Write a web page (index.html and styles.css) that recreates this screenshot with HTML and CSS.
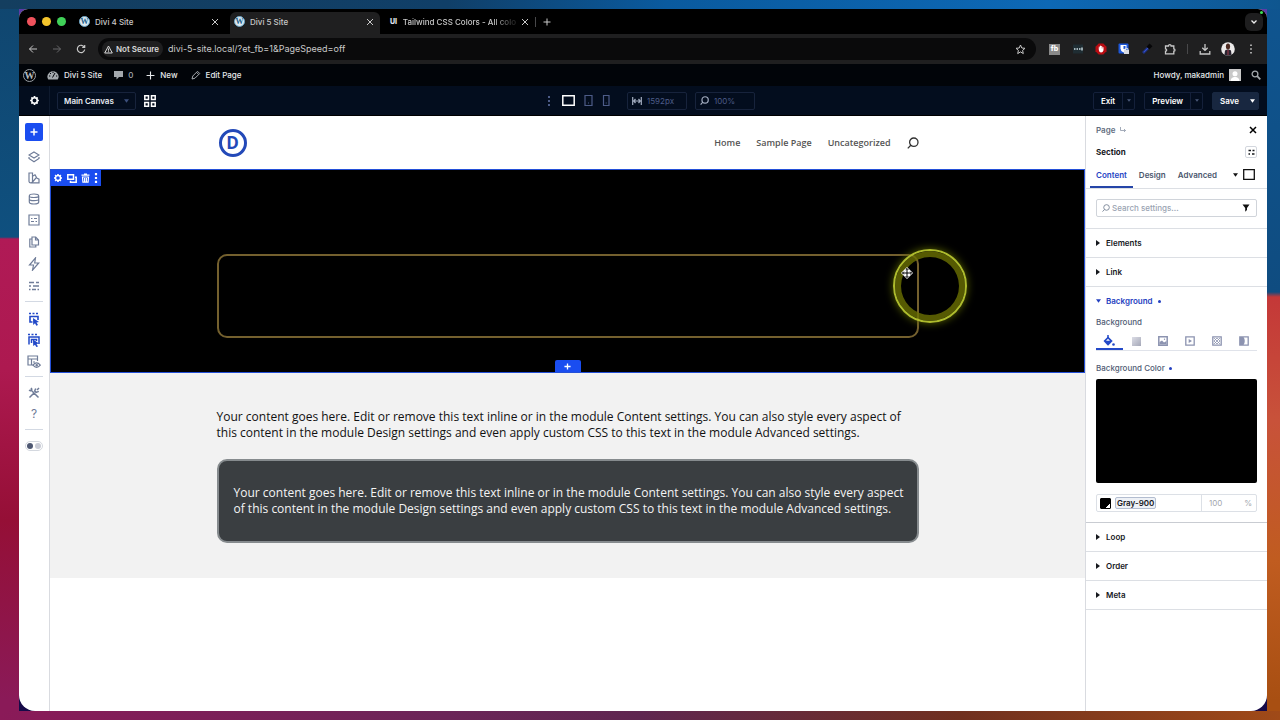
FILE: index.html
```html
<!DOCTYPE html>
<html lang="en">
<head>
<meta charset="utf-8">
<title>Divi 5 Site</title>
<link rel="stylesheet" href="styles.css">
</head>
<body>
<svg class="defs" aria-hidden="true">
  <symbol id="x" viewBox="0 0 8 8"><path d="M1 1l6 6M7 1L1 7"/></symbol>
  <symbol id="plus" viewBox="0 0 8 8"><path d="M4 0.5v7M0.5 4h7"/></symbol>
  <symbol id="gear" viewBox="0 0 12 12"><circle cx="6" cy="6" r="3" fill="none" stroke-width="1.7"/><path stroke-width="1.9" d="M6 1.2v1.6M6 9.2v1.6M1.2 6h1.6M9.2 6h1.6M2.6 2.6l1.1 1.1M8.3 8.3l1.1 1.1M2.6 9.4l1.1-1.1M8.3 3.7l1.1-1.1"/></symbol>
  <symbol id="lens" viewBox="0 0 12 12"><circle cx="6.8" cy="5.2" r="4.2" fill="none"/><path d="M3.8 8.2L.8 11.4"/></symbol>
  <symbol id="down" viewBox="0 0 6 4"><path d="M0 0h6L3 4z" fill="currentColor" stroke="none"/></symbol>
  <symbol id="right" viewBox="0 0 4 6"><path d="M0 0v6l4-3z" fill="currentColor" stroke="none"/></symbol>
</svg>

<div class="frame">
<div class="window">
  <header class="tabs">
    <div class="lights"><i class="red"></i><i class="yellow"></i><i class="green"></i></div>
    <div class="tab"><span class="wp">W</span><span class="title">Divi 4 Site</span><button aria-label="Close tab"><svg width="8" height="8"><use href="#x"/></svg></button></div>
    <div class="tab active"><span class="wp">W</span><span class="title">Divi 5 Site</span><button aria-label="Close tab"><svg width="8" height="8"><use href="#x"/></svg></button></div>
    <div class="tab last"><span class="ui">UI</span><span class="title fade">Tailwind CSS Colors - All colo</span><button aria-label="Close tab"><svg width="8" height="8"><use href="#x"/></svg></button></div>
    <i class="sep"></i>
    <button class="newtab" aria-label="New tab"><svg width="8" height="8"><use href="#plus"/></svg></button>
    <button class="tabmenu" aria-label="Search tabs"><svg width="8" height="6" viewBox="0 0 8 6"><path d="M1.5 1.5L4 4l2.500-2.500" stroke-width="1.300"/></svg></button>
    <i class="cam"></i>
  </header>

  <div class="toolbar">
    <div class="navs">
      <button aria-label="Back"><svg width="10" height="10" viewBox="0 0 10 10"><path d="M9 5H1.500M5 1.500L1.500 5 5 8.500"/></svg></button>
      <button class="dim" aria-label="Forward"><svg width="10" height="10" viewBox="0 0 10 10"><path d="M1 5h7.500M5 1.500L8.500 5 5 8.500"/></svg></button>
      <button aria-label="Reload"><svg width="10" height="10" viewBox="0 0 10 10"><path d="M8.300 3.200A3.700 3.700 0 1 0 8.700 5.500M8.700 1v2.500H6.200" stroke-width="1.200"/></svg></button>
    </div>
    <div class="omni">
      <span class="chip"><svg width="9" height="9" viewBox="0 0 9 9"><path d="M4.500 1L8.300 8H.7zM4.500 3.500v2.200M4.500 6.300v.9"/></svg>Not Secure</span>
      <input type="text" aria-label="Address" value="divi-5-site.local/?et_fb=1&amp;PageSpeed=off">
      <svg width="11" height="11" viewBox="0 0 11 11"><path d="M5.500 1l1.300 3 3.200.3-2.400 2.100.7 3.200-2.800-1.700-2.800 1.700.7-3.200L1 4.300 4.200 4z"/></svg>
    </div>
    <div class="exts">
      <button class="fb" aria-label="fb extension">fb</button>
      <button aria-label="Dots extension"><svg width="10" height="10" viewBox="0 0 10 10"><rect width="10" height="9" y=".5" fill="#1f2d33" stroke="none"/><path d="M1 5h1.500M3.500 5H5M6 5h1.500M9 3.500v3" stroke="#cfe0e6" stroke-width="1.400"/></svg></button>
      <button aria-label="Ad blocker"><svg width="12" height="12" viewBox="0 0 12 12"><path d="M3.700.5h4.600l3.200 3.200v4.600l-3.200 3.200H3.700L.5 8.300V3.700z" fill="#b80c12" stroke="none"/><path d="M4.300 6V3.600M5.500 6V2.700M6.700 6V3M7.900 6.500V4" stroke="#fff"/><path d="M3.800 5.500h4.600v2q-.5 2-2.300 2T3.800 7z" fill="#fff" stroke="none"/></svg></button>
      <button aria-label="Password manager"><svg width="12" height="12" viewBox="0 0 12 12"><rect x=".5" y=".5" width="10" height="10" rx="1" fill="#1d57d8" stroke="none"/><path d="M2.500 2h6v3.500q0 2.500-3 4-3-1.500-3-4z" fill="#fff" stroke="none"/><path d="M5.500 3H7.500v3h-2z" fill="#1d57d8" stroke="none"/><rect x="6" y="7" width="5" height="4" fill="#d8dce4" stroke="none"/><path d="M7 7V5.700h3V7" stroke="#d8dce4"/></svg></button>
      <button aria-label="Colour picker"><svg width="12" height="12" viewBox="0 0 12 12"><path d="M2 10l5-5" stroke="#20368e" stroke-width="2.600"/><path d="M7 5l3-3.200" stroke="#060608" stroke-width="4"/><path d="M3 9l4-4" stroke="#3952c4"/></svg></button>
      <button aria-label="Extensions"><svg width="12" height="12" viewBox="0 0 12 12"><path d="M1.500 3h3a1.200 1.200 0 1 1 2.600 0h2.700v2.800a1.200 1.200 0 1 1 0 2.400v2.600H1.500V8.200a1.200 1.200 0 1 0 0-2.400z" stroke-width="1.300"/></svg></button>
      <i class="sep"></i>
      <button aria-label="Downloads"><svg width="12" height="12" viewBox="0 0 12 12"><path d="M6 1v6M3.300 4.700L6 7.400l2.700-2.700M1.200 8v3h9.600V8" stroke-width="1.300"/></svg></button>
      <button aria-label="Profile"><svg width="14" height="14" viewBox="0 0 14 14"><circle cx="7" cy="7" r="6.800" fill="#eceaea" stroke="none"/><path d="M3.500 12.800L4 8.500q3-2 6 0l.5 4.300q-3.500 2-7 0z" fill="#2a2430" stroke="none"/><ellipse cx="7" cy="4.500" rx="2.100" ry="3" fill="#4d2b22" stroke="none"/><path d="M7 8v5" stroke="#a03c4c"/></svg></button>
      <button aria-label="Chrome menu"><svg width="12" height="12" viewBox="0 0 12 12"><path d="M6 1.500V3M6 5.200v1.500M6 9v1.500" stroke-width="1.600"/></svg></button>
    </div>
  </div>

  <nav class="wpbar">
    <span class="wp outline">W</span>
    <a href="#" class="site"><svg width="12" height="10" viewBox="0 0 12 10"><path d="M1.300 9.500A5.500 5.500 0 1 1 10.700 9.500z" fill="#a3a8ad" stroke="none"/><path d="M5.500 7.500L8 3M2 6h1.300M3 3l1 1M6 1.500V3M9 6h1.200" stroke="#010409"/></svg>Divi 5 Site</a>
    <a href="#" class="comments"><svg width="9" height="10" viewBox="0 0 9 10"><path d="M0 1h9v6H5L2.500 9.500V7H0z" fill="#a3a8ad" stroke="none"/></svg>0</a>
    <a href="#" class="new"><svg width="9" height="9"><use href="#plus"/></svg>New</a>
    <a href="#" class="edit"><svg width="10" height="10" viewBox="0 0 10 10"><path d="M1 9l.8-3L6.500 1.300l2.200 2.200L4 8.200zM5.500 2.300l2.200 2.200" stroke="#a3a8ad"/></svg>Edit Page</a>
    <a href="#" class="howdy">Howdy, makadmin<svg width="12" height="12" viewBox="0 0 12 12"><rect width="12" height="12" fill="#c9c9c9" stroke="none"/><circle cx="6" cy="4.700" r="2.500" fill="#fff" stroke="none"/><path d="M1.500 12q.5-4 4.500-4.300Q10 8 10.500 12z" fill="#fff" stroke="none"/></svg></a>
    <a href="#" aria-label="Search"><svg width="10" height="10" viewBox="0 0 10 10"><circle cx="4" cy="4" r="2.900" stroke="#a3a8ad" stroke-width="1.300"/><path d="M6.200 6.200L9.300 9.300" stroke="#a3a8ad" stroke-width="1.800"/></svg></a>
  </nav>

  <div class="divibar">
    <div class="left">
      <button class="settings" aria-label="Settings"><svg width="11" height="11"><use href="#gear"/></svg></button>
      <div class="selwrap"><select aria-label="Canvas"><option>Main Canvas</option></select><svg width="5" height="4"><use href="#down"/></svg></div>
      <button aria-label="Grid view"><svg width="12" height="12" viewBox="0 0 12 12"><path d="M.8.8h3.700v3.700H.8zM7.500.8h3.700v3.700H7.500zM.8 7.500h3.700v3.700H.8zM7.500 7.500h3.700v3.700H7.500z" stroke-width="1.500"/></svg></button>
    </div>
    <div class="center">
      <button aria-label="More"><svg width="8" height="12" viewBox="0 0 8 12"><path d="M4 1v2M4 5v2M4 9v2" stroke-width="2"/></svg></button>
      <button class="on" aria-label="Desktop"><svg width="13" height="11" viewBox="0 0 13 11"><path d="M.8.800h11.400v9.400H.8z" stroke-width="1.500"/></svg></button>
      <button aria-label="Tablet"><svg width="9" height="11" viewBox="0 0 9 11"><path d="M1 .5h7v10H1zM4 8h1" stroke-width="1.200"/></svg></button>
      <button aria-label="Phone"><svg width="8" height="11" viewBox="0 0 8 11"><path d="M1.500.5h5.500v10H1.500zM3.700 8h1" stroke-width="1.200"/></svg></button>
      <label class="field"><svg width="10" height="10" viewBox="0 0 10 10"><path d="M.7 1v8M9.300 1v8M1.500 5h7M3.500 3L1.800 5l1.700 2M6.500 3l1.700 2-1.700 2" stroke-width="1.200"/></svg><input type="text" aria-label="Width" value="1592px"></label>
      <label class="field"><svg width="9" height="9" stroke-width="1.600"><use href="#lens"/></svg><input type="text" aria-label="Zoom" value="100%"></label>
    </div>
    <div class="actions">
      <div class="split"><button>Exit</button><button aria-label="Exit options"><svg width="4" height="3"><use href="#down"/></svg></button></div>
      <div class="split"><button>Preview</button><button aria-label="Preview options"><svg width="4" height="3"><use href="#down"/></svg></button></div>
      <div class="split save"><button>Save</button><button aria-label="Save options"><svg width="5" height="4"><use href="#down"/></svg></button></div>
    </div>
  </div>

  <div class="workspace">
    <aside class="rail">
      <button class="add" aria-label="Add"><svg width="8" height="8"><use href="#plus"/></svg></button>
      <div class="group seven">
        <button aria-label="Layers"><svg viewBox="0 0 12 12"><path d="M6 1l5 3-5 3-5-3zM1 6v1.500l5 3.300 5-3.300V6"/></svg></button>
        <button aria-label="Presets"><svg viewBox="0 0 12 12"><path d="M1 1h3.500v8.500q0 1.300-1.700 1.300T1 9.500zM4.500 4.200L7 2.800l1.500 2.700-4 4.500M3 10.800h8V7.200L8.700 6"/></svg></button>
        <button aria-label="Dynamic data"><svg viewBox="0 0 12 12"><path d="M1.300 3q0-2 4.700-2t4.700 2v6q0 2-4.700 2T1.300 9zM1.300 3q0 1.500 4.700 1.500T10.700 3M1.300 6q0 1.700 4.700 1.700T10.700 6"/></svg></button>
        <button aria-label="Variables"><svg viewBox="0 0 12 12"><path d="M1 1h10v10H1zM3 4.500h1.500M6 4.500h3M3 7.500h3M7.500 7.500H9"/></svg></button>
        <button aria-label="Pages"><svg viewBox="0 0 12 12"><path d="M4 1h3.700L10.500 4v5H4zM4 3H1.800v8h6V9M7.500 1v3h3"/></svg></button>
        <button aria-label="Interactions"><svg class="tall" viewBox="0 0 12 14"><path d="M7.500.8L1.500 8h4l-1 5.200L10.700 6H6.700z"/></svg></button>
        <button aria-label="Options"><svg viewBox="0 0 12 12"><path d="M1 2.500h5M8 2.500h3M1 6h2M5 6h6M1 9.500h1.500M4 9.500h4M9.500 9.500H11" stroke-width="1.500"/></svg></button>
      </div>
      <div class="group three">
        <button class="blue" aria-label="Hover select"><svg class="tall" viewBox="0 0 12 14"><path d="M1 1.500h2M4.500 1.500h2M8 1.500h2M4.500 10H2V4.500h8V8" stroke-width="1.600"/><path d="M5 6l6 4-2.500.5 1.500 2.500-1.700.7L7 11.200 5.200 13z" fill="currentColor" stroke="none"/></svg></button>
        <button class="blue" aria-label="Nested select"><svg class="tall" viewBox="0 0 12 14"><path d="M0 1.500h2M3.500 1.500h2M7 1.500h2M1 11.500V4h10v7M3.500 10V6.500h5V8" stroke-width="1.500"/><path d="M5 6.500l6 4-2.500.5 1.500 2.500-1.700.5L7 11.700 5.200 13z" fill="currentColor" stroke="none"/></svg></button>
        <button aria-label="Layout view"><svg class="wide" viewBox="0 0 14 14"><path d="M6 10H1V1h9.500v5M1 4h9.500M4.500 4v6M6 7h2"/><path d="M6 10.200q3.500-4.500 7.300 0-3.800 4.500-7.300 0z"/><circle cx="9.700" cy="10.200" r=".7"/></svg></button>
      </div>
      <div class="group two">
        <button aria-label="Tools"><svg viewBox="0 0 12 12"><path d="M3.500 3.500l7 7M1.500 10.500l5-5M1 3l1.200.8 1.600-1.600L3 1M7.700 1.500L6.700 4l1.400 1.400 2.700-1M9 3l2-2" stroke-width="1.500"/></svg></button>
        <button aria-label="Help">?</button>
      </div>
      <button class="toggle" aria-label="Theme"><i></i><i></i></button>
    </aside>

    <main class="canvas">
      <div class="sitehead"><div class="inner">
        <span class="logo">D</span>
        <nav><a href="#">Home</a><a href="#">Sample Page</a><a href="#">Uncategorized</a><a href="#" aria-label="Search"><svg width="12" height="12" stroke-width="1.300"><use href="#lens"/></svg></a></nav>
      </div></div>

      <section class="dark">
        <div class="tools">
          <button aria-label="Section settings"><svg width="10" height="10"><use href="#gear"/></svg></button>
          <button aria-label="Duplicate"><svg width="10" height="9" viewBox="0 0 10 9"><path d="M.8.800h5.700v4.400H.8zM8 3.200h1.200v5H3.500V6.800" stroke-width="1.500"/></svg></button>
          <button aria-label="Delete"><svg width="9" height="10" viewBox="0 0 9 10"><path d="M.5 2.200h8M3 1h3M1.500 4h6l-.4 5.200H1.900zM3.600 5v3.500M5.400 5v3.500" stroke-width="1.200"/></svg></button>
          <button aria-label="More"><svg width="4" height="10" viewBox="0 0 4 10"><path d="M2 0v2.200M2 3.900v2.200M2 7.800V10" stroke-width="2.200"/></svg></button>
        </div>
        <div class="box outlined">
          <span class="ring"></span>
          <svg class="cursor" width="12" height="12" viewBox="0 0 12 12"><path d="M6 0l6 6-6 6-6-6z" fill="#fff" stroke="none"/><path d="M6 1.500v9M1.500 6h9M4.700 2.800L6 1.500l1.300 1.300M4.700 9.200L6 10.500l1.300-1.300M2.800 4.700L1.500 6l1.300 1.300M9.200 4.700L10.500 6 9.200 7.300" stroke="#000"/></svg>
        </div>
        <button class="addrow" aria-label="Add section"><svg width="7" height="7"><use href="#plus"/></svg></button>
      </section>

      <section class="light">
        <p>Your content goes here. Edit or remove this text inline or in the module Content settings. You can also style every aspect of this content in the module Design settings and even apply custom CSS to this text in the module Advanced settings.</p>
        <div class="box filled"><p>Your content goes here. Edit or remove this text inline or in the module Content settings. You can also style every aspect of this content in the module Design settings and even apply custom CSS to this text in the module Advanced settings.</p></div>
      </section>
    </main>

    <aside class="panel">
      <div class="crumb"><a href="#">Page</a><svg width="6" height="6" viewBox="0 0 6 6"><path d="M.5 0v3.500h5M4 2l1.500 1.500L4 5" stroke="#8d97a8" stroke-width=".8"/></svg><button aria-label="Close"><svg width="8" height="8"><use href="#x"/></svg></button></div>
      <div class="heading"><h2>Section</h2><button aria-label="Presets"><svg width="7" height="7" viewBox="0 0 7 7"><path d="M.5 1.500H3M4.500 1.500h2M.5 5h1.500M4 5h2.500" stroke-width="1.400"/></svg></button></div>
      <div class="ptabs"><button class="on">Content</button><button>Design</button><button>Advanced</button><button class="view" aria-label="View"><svg width="5" height="4"><use href="#down"/></svg><svg width="12" height="11" viewBox="0 0 12 11"><path d="M.7.700h10.600v9.600H.7z" stroke-width="1.300"/></svg></button></div>
      <div class="searchrow"><label><svg width="8" height="8" stroke-width="1.400"><use href="#lens"/></svg><input type="text" aria-label="Search settings" placeholder="Search settings..."><svg width="8" height="8" viewBox="0 0 8 8"><path d="M.5.500h7L5 4v2L3.200 7.800V4z" fill="#111" stroke="none"/></svg></label></div>
      <button class="acc"><svg width="4" height="6"><use href="#right"/></svg>Elements</button>
      <button class="acc"><svg width="4" height="6"><use href="#right"/></svg>Link</button>
      <div class="open">
        <button class="acc blue"><svg width="5" height="4"><use href="#down"/></svg>Background<i class="dot"></i></button>
        <h3>Background</h3>
        <div class="types">
          <button class="on" aria-label="Color"><svg width="12" height="12" viewBox="0 0 12 12"><path d="M5 0v3" stroke-width="1.500"/><path d="M5 1.500L9.700 6 5 10.700.5 6z" fill="currentColor" stroke="none"/><path d="M3 5.800L5 3.800l2 2z" fill="#fff" stroke="none"/><circle cx="10.500" cy="9.500" r="1.300" fill="currentColor" stroke="none"/></svg></button>
          <button aria-label="Gradient"><i class="grad"></i></button>
          <button aria-label="Image"><svg width="10" height="10" viewBox="0 0 10 10"><path d="M.8.800h8.400v8.400H.8z" stroke-width="1.500"/><path d="M1.500 8.500V6L4 4.500 6 6.500 8.500 5v3.500z" fill="currentColor" stroke="none"/><circle cx="6.500" cy="3.200" r=".7" fill="currentColor" stroke="none"/></svg></button>
          <button aria-label="Video"><svg width="10" height="10" viewBox="0 0 10 10"><path d="M.8.800h8.400v8.400H.8z" stroke-width="1.300"/><path d="M3.700 3v4L7 5z" fill="currentColor" stroke="none"/></svg></button>
          <button aria-label="Pattern"><svg width="10" height="10" viewBox="0 0 10 10"><path d="M.8.800h8.400v8.400H.8z" stroke-width="1.300"/><path d="M2 2l6 6M2 8l6-6M5 2l3 3-3 3-3-3z" stroke-width=".8"/></svg></button>
          <button aria-label="Mask"><svg width="10" height="10" viewBox="0 0 10 10"><path d="M.8.800h8.400v8.400H.8z" stroke-width="1.300"/><path d="M1 1h3.500q2.500 4 0 8H1z" fill="currentColor" stroke="none"/></svg></button>
        </div>
        <h3>Background Color<i class="dot"></i></h3>
        <button class="preview" aria-label="Background color preview"></button>
        <div class="color"><div class="name"><button class="swatch" aria-label="Pick color"></button><button class="var">Gray-900</button></div><label class="opacity"><input type="text" aria-label="Opacity" value="100">%</label></div>
      </div>
      <button class="acc"><svg width="4" height="6"><use href="#right"/></svg>Loop</button>
      <button class="acc"><svg width="4" height="6"><use href="#right"/></svg>Order</button>
      <button class="acc"><svg width="4" height="6"><use href="#right"/></svg>Meta</button>
    </aside>
  </div>
</div>
</div>
</body>
</html>
```
FILE: styles.css
```css
* { box-sizing: border-box; }
html, body { margin: 0; height: 100%; }
body {
  padding: 9px 13px 9px 19px;
  font-family: Inter, "Liberation Sans", sans-serif;
  font-size: 8px;
  line-height: 12px;
  background:
    linear-gradient(90deg, #143e5f, #103f68 35%, #0a5a9e 52%, #0d68b5 82%, #0f568f) 0 0 / 100% 9px no-repeat,
    linear-gradient(90deg, #8a1a58, #6b2558 35%, #5f2650 50%, #70301f 75%, #a04a18) 0 100% / 100% 9px no-repeat,
    linear-gradient(180deg, #10466f, #0f507f 237px, #b01a56 239px, #ad1950 370px, #950f36 520px, #8a1a58 700px) 0 0 / 19px 100% no-repeat,
    linear-gradient(180deg, #0f5590, #0f4c80 292px, #c43838 297px, #c8523a 420px, #c05c20 560px, #a84f12 700px) 100% 0 / 13px 100% no-repeat,
    #222;
}
button, input, select { font: inherit; color: inherit; margin: 0; padding: 0; border: 0; background: none; min-width: 0; outline: 0; }
button { display: inline-flex; align-items: center; justify-content: center; flex: none; }
a { color: inherit; text-decoration: none; }
svg { display: block; flex: none; fill: none; stroke: currentColor; }
.defs { position: absolute; width: 0; height: 0; }
.frame { height: 100%; background: linear-gradient(#5b3aa8 50%, #160a48 50%); }
.window { height: 100%; display: flex; flex-direction: column; overflow: hidden; border-radius: 9px 9px 16px 16px; background: #fff; }

.tabs { flex: none; height: 25px; display: flex; align-items: center; background: #000; color: #c9c9c9; padding: 0 3px 0 8px; position: relative; font-weight: 500; }
.lights { display: flex; gap: 6px; width: 48px; }
.lights i { width: 9px; height: 9px; border-radius: 50%; }
.red { background: #f0525c; }
.yellow { background: #f5c52c; }
.green { background: #40d158; }
.tab { width: 150px; height: 22px; margin-right: 5px; padding: 0 6px 3px 4px; display: flex; align-items: center; gap: 5px; align-self: flex-end; border-radius: 6px 6px 0 0; }
.tab.active { background: #1f1f20; }
.tab.last { margin-right: 0; }
.tab .title { flex: 1; white-space: nowrap; }
.tab .fade { mask-image: linear-gradient(90deg, #000 80%, #0003 97%); }
.wp { width: 11px; height: 11px; border-radius: 50%; background: #dce9f0; border: 1px solid #6ca4c4; color: #1c5f8a; font: 700 8px/9px "Liberation Serif", serif; text-align: center; flex: none; }
.ui { width: 10px; font-weight: 800; font-size: 7px; text-align: center; color: #e4e4ee; }
.sep { width: 1px; height: 10px; background: #48484a; }
.newtab { margin-left: 7px; }
.tabmenu { margin-left: auto; width: 18px; height: 18px; border-radius: 6px; background: #1e1e1f; color: #eee; margin-right: 1px; }
.cam { position: absolute; right: 4px; top: 2px; width: 3px; height: 3px; border-radius: 50%; background: #3ede55; }

.toolbar { flex: none; height: 30px; display: flex; align-items: center; background: #1f1f20; color: #c8c8c8; padding: 0 9px; }
.navs { display: flex; gap: 14px; width: 70px; }
.dim { color: #68686a; }
.omni { flex: 1; height: 22px; border-radius: 11px; background: #0a0a0b; display: flex; align-items: center; padding: 0 10px 0 4px; gap: 5px; font-size: 9px; }
.omni input { flex: 1; color: #c9c9c9; }
.chip { display: flex; align-items: center; gap: 3px; height: 16px; padding: 0 4px 0 2px; border-radius: 8px; background: #1f1f20; font-size: 8px; font-weight: 600; color: #d8d8d8; white-space: nowrap; }
.exts { display: flex; align-items: center; gap: 9px; padding-left: 11px; }
.exts button { width: 14px; height: 14px; }
.exts .fb { width: 11px; height: 11px; margin: 0 2px; background: #8a8a8a; color: #fff; font-weight: 800; font-size: 7px; }
.exts .sep { margin: 0 1px; }

.wpbar { flex: none; height: 22px; display: flex; align-items: center; background: #010409; color: #e6e8ea; padding: 0 6px 0 4px; font-weight: 500; white-space: nowrap; }
.wpbar a { display: flex; align-items: center; gap: 5px; }
.wpbar .outline { width: 13px; height: 13px; background: none; border-color: #9a9fa4; color: #b4b8bc; line-height: 11px; font-size: 10px; }
.wpbar .site { margin-left: 11px; }
.wpbar .comments { margin-left: 12px; color: #a3a8ad; }
.wpbar .new { margin-left: 13px; }
.wpbar .edit { margin-left: 13px; }
.wpbar .howdy { margin-left: auto; margin-right: 10px; }

.divibar { flex: none; height: 30px; display: grid; grid-template-columns: 1fr auto 1fr; align-items: center; background: #030d1e; color: #fff; border-bottom: 1px solid #000; font-weight: 600; }
.divibar .left { display: flex; align-items: center; height: 100%; }
.settings { width: 31px; height: 100%; border-right: 1px solid #0e1a2e; }
.selwrap { margin: 0 8px 0 7px; width: 79px; height: 18px; border: 1px solid #17233c; border-radius: 2px; display: flex; align-items: center; padding: 0 6px; color: #3c4f7c; }
.selwrap select { flex: 1; appearance: none; color: #e8ebf2; }
.center { display: flex; align-items: center; color: #4d5c88; padding-left: 14px; }
.center button { margin-right: 9px; }
.center .on { color: #fff; }
.field { width: 60px; height: 18px; margin-left: 8px; border: 1px solid #17233c; border-radius: 2px; display: flex; align-items: center; gap: 5px; padding: 0 4px; font-weight: 400; }
.field svg { color: #a4adc0; }
.field input { width: 100%; }
.actions { display: flex; justify-content: flex-end; gap: 9px; padding-right: 8px; }
.split { display: flex; height: 18px; border: 1px solid #14203a; border-radius: 2px; }
.split button + button { width: 12px; border-left: 1px solid #14203a; color: #4a5878; }
.split button:first-child { padding: 0 7px; }
.split.save { background: #182740; border-color: #182740; }
.split.save button + button { color: #fff; border: 0; }

.workspace { flex: 1; min-height: 0; display: flex; }
.rail { flex: none; width: 31px; border-right: 1px solid #d9dbe0; display: flex; flex-direction: column; align-items: center; padding-top: 7px; color: #6f7c98; }
.rail .add { width: 18px; height: 18px; background: #1a4df0; color: #fff; border-radius: 2px; }
.add svg { stroke-width: 1.5; }
.group { display: grid; width: 18px; justify-items: center; border-bottom: 1px solid #d3d9e3; }
.group svg { width: 12px; height: 12px; stroke-width: 1.2; }
.group .tall { height: 14px; }
.group .wide { width: 14px; height: 14px; }
.group button { font-size: 12px; }
.seven { height: 161px; padding: 5px 0 4px; }
.three { height: 75px; padding: 6px 0 3px; }
.two { height: 53px; padding: 5px 0 4px; }
.rail .blue { color: #2249c8; }
.toggle { width: 18px; height: 10px; margin-top: 11px; border: 1px solid #d4d8df; border-radius: 5px; gap: 2px; }
.toggle i { width: 6px; height: 6px; border-radius: 50%; background: #4e5872; }
.toggle i + i { background: #c9ccd6; }

.canvas { flex: 1; min-width: 0; background: #fff; font-family: "Open Sans", "Noto Sans", sans-serif; }
.sitehead { padding: 13px 0 12px; }
.inner, .box, .light > p { width: 68%; max-width: 702px; margin: 0 auto; }
.inner { display: flex; align-items: center; justify-content: space-between; height: 28px; }
.logo { width: 28px; height: 28px; margin-left: 2px; border: 3px solid #2349b8; border-radius: 50%; color: #2349b8; font: 700 17px/22px "Open Sans", sans-serif; text-align: center; }
.inner nav { display: flex; align-items: center; gap: 16px; font-size: 9px; font-weight: 600; color: #555; }
.inner nav svg { color: #333; }
.dark { position: relative; background: #000; border: 1px solid #2450d8; padding: 84px 0 34px; }
.tools { position: absolute; left: 0; top: 0; height: 16px; width: 50px; padding: 0 3px 0 2px; display: flex; align-items: center; justify-content: space-between; background: #1a4df0; color: #fff; }
.box { border-radius: 10px; min-height: 84px; }
.outlined { position: relative; border: 2px solid #74602e; }
.ring { position: absolute; right: -50px; top: -7px; width: 74px; height: 74px; border-radius: 50%; border: 2px solid #aebc2c; box-shadow: inset 0 0 0 6px #6b7003cc, 0 0 8px #5a6400; }
.cursor { position: absolute; right: 4px; top: 11px; }
.addrow { position: absolute; bottom: 0; left: 50%; margin-left: -13px; width: 26px; height: 12px; border-radius: 2px 2px 0 0; background: #1a4df0; color: #fff; }
.addrow svg { stroke-width: 1.5; }
.light { background: #f2f2f2; padding: 36px 0 35px; color: #111; font-size: 12px; line-height: 16px; }
.light .filled { margin-top: 18px; padding: 24px 8px 24px 15px; background: #3a3e41; border: 2px solid #868b8e; color: #f4f4f4; }
.filled p { margin: 0; }

.panel { flex: none; width: 182px; border-left: 1px solid #d9dbe0; display: flex; flex-direction: column; color: #16181d; font-weight: 600; }
.crumb, .heading { display: flex; align-items: center; padding: 0 10px; }
.crumb { height: 28px; gap: 5px; color: #626d80; }
.crumb button { margin-left: auto; color: #000; }
.crumb button svg { stroke-width: 1.5; }
.heading { height: 16px; }
h2, h3 { margin: 0; font-size: 8px; }
.heading button { margin-left: auto; width: 12px; height: 12px; border: 1px solid #d3d7de; border-radius: 2px; }
.ptabs { display: flex; height: 29px; border-bottom: 1px solid #dcdfe4; padding: 0 12px 0 4px; color: #4a566c; }
.ptabs button { padding: 3px 6px 0; border-bottom: 2px solid transparent; }
.ptabs .on { color: #2545c4; border-color: #2545a8; }
.ptabs .view { margin-left: auto; padding: 3px 0 0; gap: 5px; color: #111; }
.searchrow { padding: 10px 10px 11px; border-bottom: 1px solid #dcdfe4; }
.searchrow label { height: 18px; border: 1px solid #d0d4da; border-radius: 2px; display: flex; align-items: center; gap: 2px; padding: 0 6px 0 5px; font-weight: 500; color: #7b8798; }
.searchrow input { flex: 1; }
.searchrow input::placeholder { color: #9aa3b2; }
.acc { width: 100%; height: 29px; justify-content: flex-start; gap: 6px; padding: 0 10px; border-bottom: 1px solid #dcdfe4; }
.open { padding: 0 10px 10px; border-bottom: 1px solid #c9ccd2; }
.open .acc { height: 28px; padding: 0; border: 0; color: #2440c0; gap: 5px; }
.dot { display: inline-block; width: 3px; height: 3px; border-radius: 50%; background: #2440c0; vertical-align: middle; margin-left: 4px; }
.acc .dot { margin-left: 0; }
.open h3 { color: #515d75; font-weight: 500; height: 14px; line-height: 14px; }
.types { display: grid; grid-template-columns: repeat(6, 1fr); height: 22px; margin-bottom: 10px; color: #8c93b0; border-bottom: 1px solid #e0e3ea; }
.types button { padding-top: 5px; border-bottom: 2px solid transparent; }
.types .on { color: #2349c8; border-color: #2349c8; }
.grad { width: 9px; height: 9px; background: linear-gradient(135deg, #dcdde6, #a5a8b8); }
.open .preview { display: block; width: 100%; height: 104px; margin: 4px 0 11px; background: #000; border-radius: 2px; }
.color { display: flex; height: 18px; border: 1px solid #dce0e6; border-radius: 2px; }
.name { flex: 1; display: flex; align-items: center; gap: 4px; padding-left: 3px; border-right: 1px solid #dce0e6; }
.swatch { width: 11px; height: 11px; border-radius: 1px; background: linear-gradient(135deg, #000 75%, #fff 75%); border: 1px solid #000; }
.var { height: 12px; padding: 0 1px; border: 1px solid #b3bdd0; border-radius: 2px; background: #eef1f6; }
.opacity { width: 54px; display: flex; align-items: center; padding: 0 4px 0 7px; color: #a3a7ae; font-weight: 400; }
.opacity input { flex: 1; }
```
